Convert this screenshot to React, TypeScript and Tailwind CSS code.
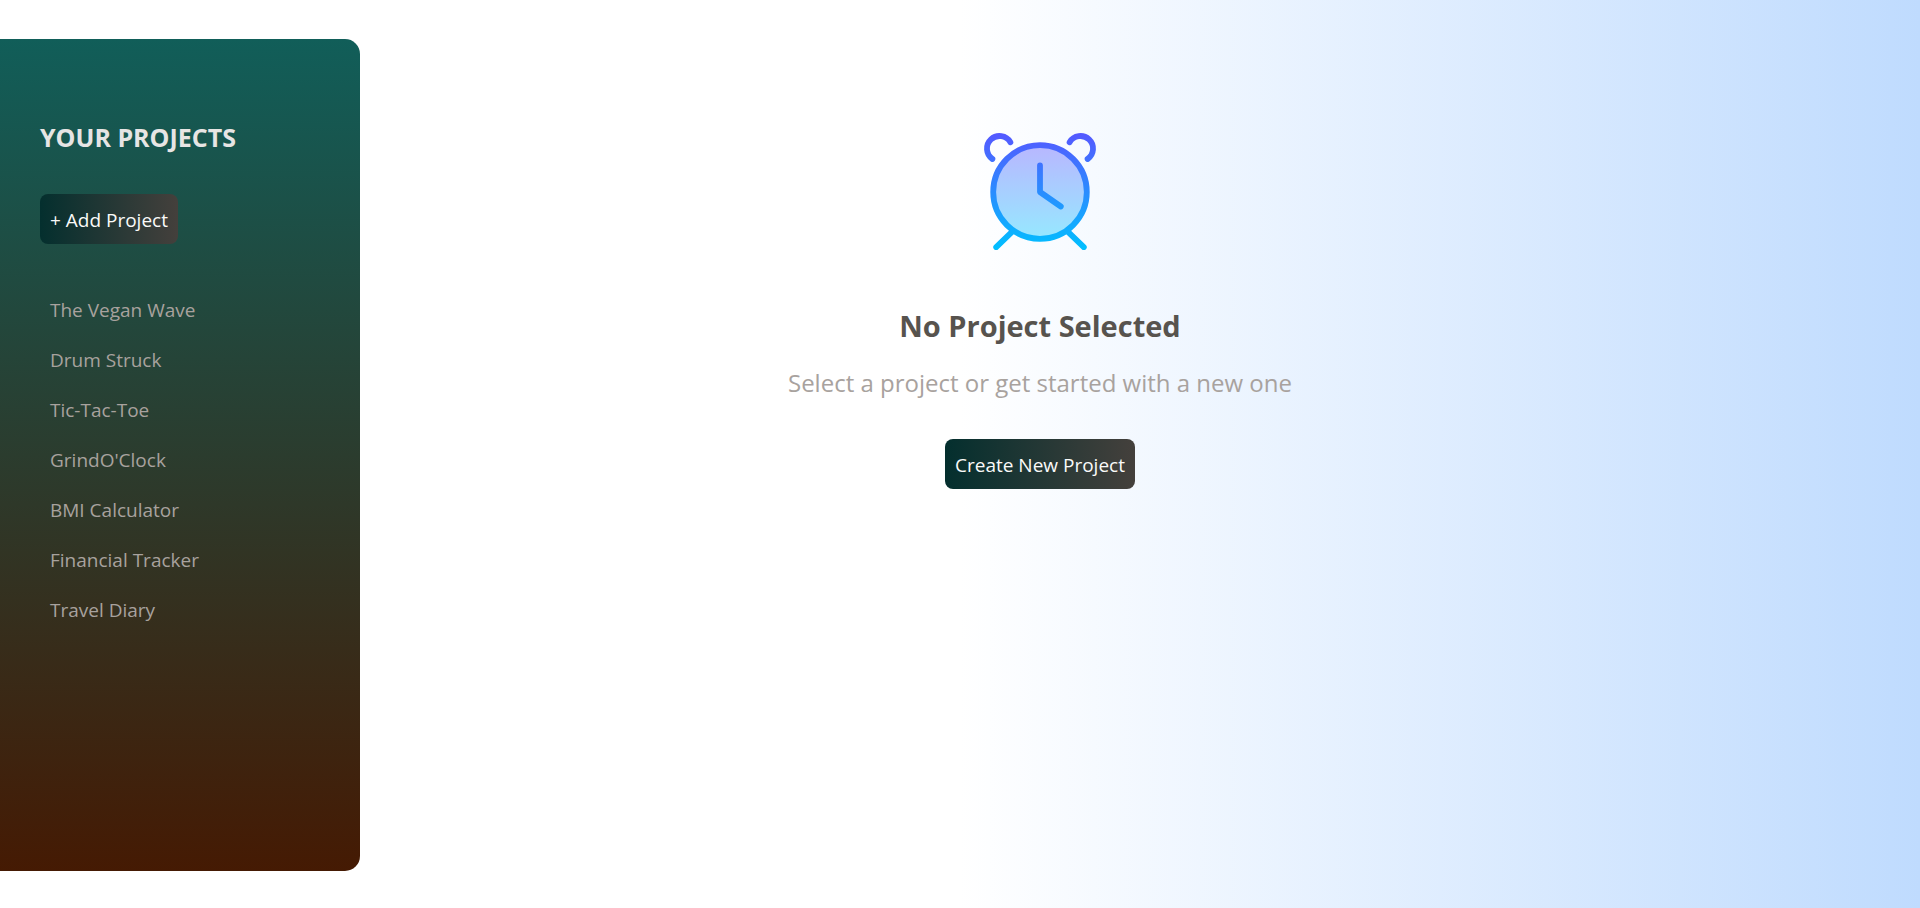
const projects = [
  "The Vegan Wave",
  "Drum Struck",
  "Tic-Tac-Toe",
  "GrindO'Clock",
  "BMI Calculator",
  "Financial Tracker",
  "Travel Diary",
];

function GradientButton({ children }: { children: string }) {
  return (
    <button
      type="button"
      className="h-[50px] rounded-lg bg-linear-to-r/srgb from-[#042f2e] to-[#44403c] px-[10px] pt-0.5 text-[19px] whitespace-nowrap text-[#fafaf9]"
    >
      {children}
    </button>
  );
}

function AlarmClock() {
  return (
    <svg viewBox="0 0 120 120" fill="none" className="size-[120px]" aria-hidden="true">
      <defs>
        <linearGradient id="clock-line" gradientUnits="userSpaceOnUse" x1="0" y1="3" x2="0" y2="120">
          <stop offset="0" stopColor="#5558ff" />
          <stop offset="1" stopColor="#00c0ff" />
        </linearGradient>
        <linearGradient id="clock-face" gradientUnits="userSpaceOnUse" x1="0" y1="14" x2="0" y2="109">
          <stop offset="0" stopColor="#b9b6ff" />
          <stop offset="1" stopColor="#96e8ff" />
        </linearGradient>
      </defs>
      <circle cx="60" cy="62" r="46.8" fill="url(#clock-face)" />
      <g stroke="url(#clock-line)" strokeWidth="5.8" strokeLinecap="round" strokeLinejoin="round">
        <circle cx="60" cy="62" r="46.8" />
        <path d="M60 35.5V62L80.8 76.5" />
        <path d="M30.4 12.2A12.6 12.6 0 1 0 12.4 29" />
        <path d="M89.6 12.2A12.6 12.6 0 1 1 107.6 29" />
        <path d="M32.5 101.3L16.2 117.2" />
        <path d="M87.5 101.3L103.8 117.2" />
      </g>
    </svg>
  );
}

export default function App() {
  return (
    <div className="flex min-h-screen gap-10 bg-linear-to-r/srgb from-white via-white to-[#bfdbfe] pt-[39px] pb-[37px] font-['Open_Sans','Noto_Sans',sans-serif]">
      <aside className="w-[360px] shrink-0 rounded-r-[15px] bg-linear-to-b/srgb from-[#115e59] to-[#451a03] px-10 pt-[81px] pb-10">
        <h2 className="text-[25px] leading-[35px] font-bold text-[#e7e5e4] uppercase">Your Projects</h2>
        <div className="mt-[39px]">
          <GradientButton>+ Add Project</GradientButton>
        </div>
        <ul className="mt-10">
          {projects.map((name) => (
            <li key={name}>
              <button type="button" className="h-[50px] w-full px-[10px] pt-0.5 text-left text-[19px] text-[#a8a29e]">
                {name}
              </button>
            </li>
          ))}
        </ul>
      </aside>
      <main className="flex w-2/3 flex-col items-center pt-[91px] text-center">
        <AlarmClock />
        <h2 className="mt-14 text-[29px] leading-10 font-bold text-[#57534e]">No Project Selected</h2>
        <p className="mt-[19px] mb-[39px] text-[24px] leading-[35px] text-[#a8a29e]">
          Select a project or get started with a new one
        </p>
        <GradientButton>Create New Project</GradientButton>
      </main>
    </div>
  );
}
